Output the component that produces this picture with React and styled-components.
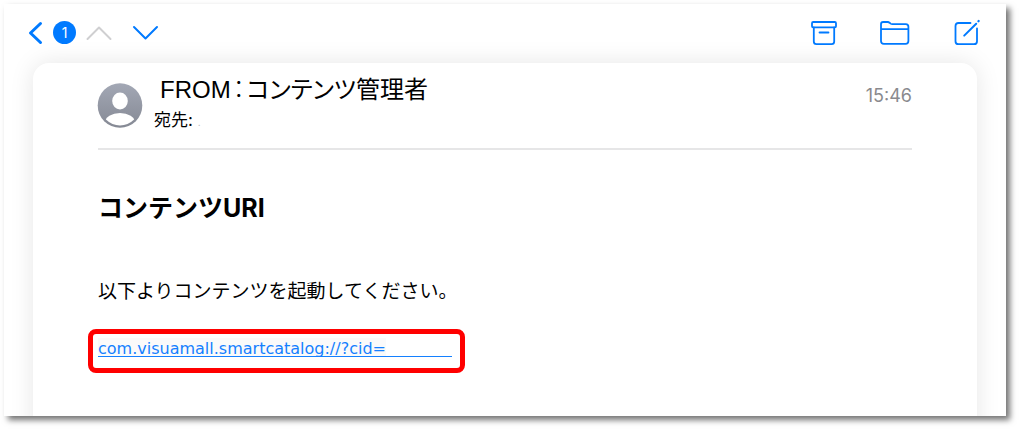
import React from "react";
import styled, { createGlobalStyle } from "styled-components";

const GlobalStyle = createGlobalStyle`
  * {
    box-sizing: border-box;
  }

  body {
    margin: 0;
    background-color: #ffffff;
    color: #000000;
    font-family: "Inter", "Noto Sans CJK JP", sans-serif;
  }
`;

const Page = styled.div`
  height: 100vh;
  padding: 4px 13px 13px 4px;
`;

const MailWindow = styled.main`
  display: flex;
  flex-direction: column;
  height: 100%;
  padding: 0 29px;
  overflow: hidden;
  background-color: #ffffff;
`;

const WindowShadow = styled.div`
  height: 100%;
  box-shadow: 4px 4px 6px rgba(0, 0, 0, 0.55);
`;

const Toolbar = styled.header`
  display: flex;
  flex-shrink: 0;
  align-items: center;
  justify-content: space-between;
  height: 59px;
  margin: 0 -4px 0 -9px;
  padding-bottom: 2px;
`;

const ButtonGroup = styled.div`
  display: flex;
  align-items: center;
  gap: ${({ $gap }) => $gap}px;
`;

const IconButton = styled.button`
  display: flex;
  align-items: center;
  gap: 9px;
  padding: 0;
  border: none;
  background: none;
  color: #007aff;
  cursor: pointer;

  &:disabled {
    color: #cfcfd1;
    cursor: default;
  }
`;

const Icon = styled.svg`
  display: block;
  fill: none;
  stroke: currentColor;
  stroke-width: ${({ $stroke }) => $stroke || 2};
  stroke-linecap: round;
  stroke-linejoin: round;
`;

const Badge = styled.span`
  display: flex;
  align-items: center;
  justify-content: center;
  width: 23px;
  height: 23px;
  border-radius: 50%;
  background-color: #007aff;
  color: #ffffff;
  font-family: "Inter", sans-serif;
  font-size: 14px;
`;

const Card = styled.article`
  flex: 1 0 auto;
  min-height: 100%;
  padding: 12px 65px 0;
  border-radius: 16px 16px 0 0;
  background-color: #ffffff;
  box-shadow: 0 0 24px rgba(0, 0, 0, 0.1);
`;

const MailHeader = styled.div`
  display: flex;
  align-items: flex-start;
  height: 75px;
  border-bottom: 2px solid #e6e6e7;
`;

const Avatar = styled.svg`
  flex-shrink: 0;
  width: 46px;
  height: 46px;
  margin: 8px 11px 0 -1px;
`;

const Sender = styled.div`
  flex: 1;
`;

const From = styled.div`
  padding-left: 6px;
  font-family: "Liberation Sans", "Noto Sans CJK JP", sans-serif;
  font-size: 24px;
  line-height: 30px;
  font-feature-settings: "palt";
`;

const Colon = styled.span`
  margin: 0 2px;
  font-weight: 300;
`;

const To = styled.div`
  font-size: 17px;
  line-height: 30px;
`;

const Faint = styled.span`
  color: #b5b5b5;
  font-size: 10px;
`;

const Time = styled.time`
  color: #8a8a8e;
  font-size: 18px;
  line-height: 42px;
`;

const Subject = styled.h1`
  margin: 38px 0 0;
  font-size: 25px;
  font-weight: 700;
  line-height: 40px;
`;

const Message = styled.p`
  margin: 48px 0 0;
  font-size: 19px;
  line-height: 32px;
`;

const LinkFrame = styled.div`
  display: flex;
  align-items: flex-start;
  width: fit-content;
  height: 44px;
  margin: 21px 0 0 -10px;
  padding: 4px 8px 0 5px;
  border: 5px solid #ff0000;
  border-radius: 8px;
`;

const ContentLink = styled.a`
  display: flex;
  align-items: flex-start;
  height: 19px;
  border-bottom: 1px solid #1480ff;
  color: #1480ff;
  font-family: "DejaVu Sans", sans-serif;
  font-size: 16px;
  line-height: 22px;
  text-decoration: none;

  &::after {
    width: 66px;
    content: "";
  }
`;

const LinkText = styled.span`
  background: linear-gradient(#fafafa, #fafafa) no-repeat 0 0 / 100% 18px;
`;

const App = () => {
  return (
    <>
      <GlobalStyle />
      <Page>
        <WindowShadow>
          <MailWindow>
            <Toolbar>
              <ButtonGroup $gap={10}>
                <IconButton aria-label="戻る">
                  <Icon width="20" height="24" viewBox="0 0 20 24" $stroke={3}>
                    <path d="M16.5 2.5L6.500 12l10 9.500" />
                  </Icon>
                  <Badge>1</Badge>
                </IconButton>
                <IconButton aria-label="前のメール" disabled>
                  <Icon width="26" height="16" viewBox="0 0 26 16">
                    <path d="M1.500 14L13 2.500 24.500 14" />
                  </Icon>
                </IconButton>
                <IconButton aria-label="次のメール">
                  <Icon width="46" height="16" viewBox="0 0 46 16">
                    <path d="M12 2l11.500 11.500L35 2" />
                  </Icon>
                </IconButton>
              </ButtonGroup>
              <ButtonGroup $gap={42}>
                <IconButton aria-label="アーカイブ">
                  <Icon width="26" height="28" viewBox="1 0 26 28" $stroke={1.8}>
                    <rect x="2" y="3" width="24" height="5.400" rx="1.200" />
                    <path d="M3.800 8.400v14.200q0 2.600 2.600 2.600h15.200q2.600 0 2.600-2.600V8.400M9.500 13.500h9" />
                  </Icon>
                </IconButton>
                <IconButton aria-label="フォルダ">
                  <Icon width="32" height="28" viewBox="0 0 32 28" $stroke={1.8}>
                    <path d="M2 22V5.200Q2 3 4.200 3h4.600q1 0 1.800.8l1 .8q.8.600 1.800.600h13.400q2.600 0 2.600 2.600V22q0 2.800-2.800 2.800H4.800Q2 24.800 2 22zM2 10.200h27.400" />
                  </Icon>
                </IconButton>
                <IconButton aria-label="新規作成">
                  <Icon width="28" height="28" viewBox="0 0 28 28" $stroke={1.8}>
                    <path d="M17.500 4H5.500Q2.500 4 2.500 7v15.200q0 3 3 3h15.500q3 0 3-3V9.500" />
                    <path d="M11.200 16.600L23.200 4.800" strokeWidth="2" />
                    <path d="M25.400 2.300l.3-.3" strokeWidth="2.200" />
                  </Icon>
                </IconButton>
              </ButtonGroup>
            </Toolbar>

            <Card>
              <MailHeader>
                <Avatar viewBox="0 0 46 46" aria-hidden="true">
                  <defs>
                    <linearGradient id="avatar" x1="0" y1="0" x2="0" y2="1">
                      <stop offset="0" stopColor="#a3a8b5" />
                      <stop offset="1" stopColor="#858994" />
                    </linearGradient>
                    <clipPath id="inner">
                      <circle cx="23" cy="23" r="19.500" />
                    </clipPath>
                  </defs>
                  <circle cx="23" cy="22.500" r="22.300" fill="url(#avatar)" />
                  <ellipse cx="23" cy="18" rx="7.800" ry="8.500" fill="#fff" />
                  <ellipse
                    cx="23"
                    cy="39.500"
                    rx="15"
                    ry="9.500"
                    fill="#fff"
                    clipPath="url(#inner)"
                  />
                </Avatar>
                <Sender>
                  <From>
                    FROM<Colon>：</Colon>コンテンツ管理者
                  </From>
                  <To>
                    宛先: <Faint>.</Faint>
                  </To>
                </Sender>
                <Time dateTime="15:46">15:46</Time>
              </MailHeader>
              <Subject>コンテンツURI</Subject>
              <Message>以下よりコンテンツを起動してください。</Message>
              <LinkFrame>
                <ContentLink href="com.visuamall.smartcatalog://?cid=">
                  <LinkText>com.visuamall.smartcatalog://?cid=</LinkText>
                </ContentLink>
              </LinkFrame>
            </Card>
          </MailWindow>
        </WindowShadow>
      </Page>
    </>
  );
};

export default App;
